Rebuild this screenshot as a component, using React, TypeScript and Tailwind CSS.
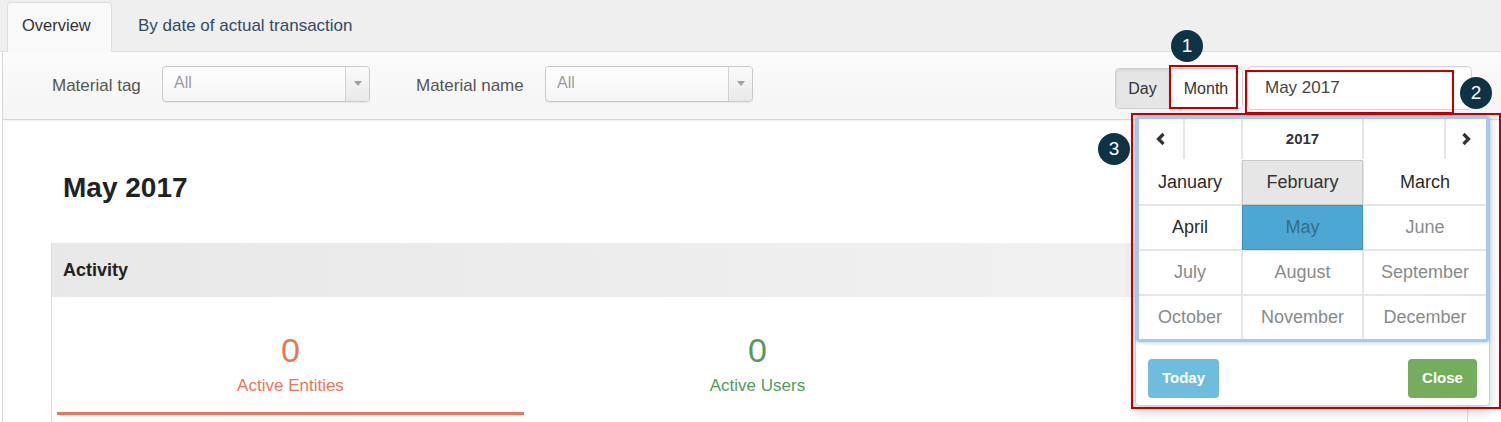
import React from 'react';

type Tone = 'dark' | 'hover' | 'active' | 'muted';

const months: { name: string; tone: Tone }[] = [
  { name: 'January', tone: 'dark' },
  { name: 'February', tone: 'hover' },
  { name: 'March', tone: 'dark' },
  { name: 'April', tone: 'dark' },
  { name: 'May', tone: 'active' },
  { name: 'June', tone: 'muted' },
  { name: 'July', tone: 'muted' },
  { name: 'August', tone: 'muted' },
  { name: 'September', tone: 'muted' },
  { name: 'October', tone: 'muted' },
  { name: 'November', tone: 'muted' },
  { name: 'December', tone: 'muted' },
];

const toneClass: Record<Tone, string> = {
  dark: 'bg-white text-[#2b2b2b]',
  hover: 'bg-[#e6e6e6] text-[#333] outline outline-1 outline-[#c9c9c9]',
  active: 'bg-[#4ca8d2] text-[#346e89] outline outline-1 outline-[#3d96bf]',
  muted: 'bg-white text-[#8a8a8a]',
};

function SelectBox() {
  return (
    <div className="mb-[4px] flex h-[36px] w-[208px] rounded-[4px] border border-[#c9c9c9] bg-linear-to-b from-white to-[#f5f5f5] shadow-[0_1px_1px_rgba(0,0,0,0.06)]">
      <div className="flex flex-1 items-center pb-[1px] pl-[11px] text-[16px] text-[#9b9b9b]">All</div>
      <div className="flex w-[24px] items-center justify-center rounded-r-[4px] border-l border-[#d2d2d2] bg-linear-to-b from-[#fafafa] to-[#e9e9e9]">
        <span className="border-x-[4px] border-t-[5px] border-x-transparent border-t-[#a0a0a0]" />
      </div>
    </div>
  );
}

function Chevron({ dir }: { dir: 'left' | 'right' }) {
  return (
    <svg width="12" height="14" viewBox="0 0 12 14" fill="none">
      <path
        d={dir === 'left' ? 'M8.5 2 L3.5 7 L8.5 12' : 'M3.5 2 L8.5 7 L3.5 12'}
        stroke="#333"
        strokeWidth="3.2"
        strokeLinejoin="miter"
      />
    </svg>
  );
}

function Marker({ n, className }: { n: number; className: string }) {
  return (
    <div
      className={`absolute flex h-[32px] w-[32px] items-center justify-center rounded-full bg-[#0d3345] text-[19px] text-white ${className}`}
    >
      {n}
    </div>
  );
}

function Stat({ value, label, color, underline }: { value: string; label: string; color: string; underline?: string }) {
  return (
    <div className="flex w-[467px] flex-col items-center pt-[34px]">
      <div className={`text-[34px] leading-[38px] ${color}`}>{value}</div>
      <div className={`mt-[7px] text-[17px] leading-[20px] ${color}`}>{label}</div>
      <div className={`mt-[16px] h-[3px] w-full ${underline ?? 'bg-transparent'}`} />
    </div>
  );
}

export default function App() {
  return (
    <div className="relative h-[422px] w-[1501px] overflow-hidden bg-white font-['Liberation_Sans',Arial,sans-serif]">
      {/* tabs */}
      <div className="flex h-[52px] items-end border-b border-[#dedede] bg-[#efefef] pl-[7px]">
        <div className="-mb-px flex h-[50px] w-[105px] items-center rounded-t-[4px] border border-b-0 border-[#dedede] bg-[#f9f9f9] pb-[4px] pl-[14px] text-[16.5px] text-[#333]">
          Overview
        </div>
        <div className="flex h-[50px] items-center pl-[26px] text-[17px] text-[#2f4a66]">By date of actual transaction</div>
      </div>

      <div className="ml-[2px] border-l border-[#dcdcdc]">
        {/* filter bar */}
        <div className="flex h-[68px] items-center border-b border-[#d6d6d6] bg-linear-to-b from-[#fbfbfb] to-[#f5f5f5] pl-[49px] pr-[29px] shadow-[0_1px_2px_rgba(0,0,0,0.06)]">
          <div className="w-[110px] text-[17px] text-[#555]">Material tag</div>
          <SelectBox />
          <div className="ml-[46px] w-[129px] text-[17px] text-[#555]">Material name</div>
          <SelectBox />
          <div className="flex-1" />
          <div className="mt-[6px] flex h-[41px] overflow-hidden rounded-[4px] border border-[#cdcdcd] text-[16px] text-[#333]">
            <div className="flex w-[53px] items-center justify-center bg-[#e6e6e6] shadow-[inset_0_2px_3px_rgba(0,0,0,0.08)]">Day</div>
            <div className="flex w-[73px] items-center justify-center border-l border-[#cdcdcd] bg-white">Month</div>
          </div>
          <div className="ml-[4px] mt-[4px] flex h-[44px] w-[225px] items-center rounded-[5px] border border-[#d4d4d4] bg-white pl-[17px] text-[17px] text-[#444] shadow-[inset_0_1px_1px_rgba(0,0,0,0.05)]">
            May 2017
          </div>
        </div>

        {/* content */}
        <div className="pl-[48px] pr-[33px]">
          <h1 className="ml-[12px] pt-[52px] text-[28px] font-bold leading-[32px] text-[#222]">May 2017</h1>
          <div className="mt-[39px] h-[200px] border-x border-[#dddddd]">
            <div className="flex h-[54px] items-center bg-linear-to-r from-[#e8e8e8] to-[#f4f4f4] pl-[11px] text-[18px] font-bold text-[#222]">
              Activity
            </div>
            <div className="flex pl-[5px]">
              <Stat value="0" label="Active Entities" color="text-[#ea7659]" underline="bg-[#ea7659]" />
              <Stat value="0" label="Active Users" color="text-[#4f9d58]" />
            </div>
          </div>
        </div>
      </div>

      {/* month picker popover */}
      <div className="absolute left-[1135px] top-[115px] w-[355px] rounded-[4px] border border-[#cfcfcf] bg-white shadow-[0_6px_12px_rgba(0,0,0,0.18)]">
        <div className="rounded-[3px] border-[3px] border-[#a4c9f2] shadow-[0_0_4px_rgba(80,150,230,0.55)]">
          <div className="grid grid-cols-[44px_56px_119px_80px_40px] gap-[2px] bg-[#e6e6e6]">
            <div className="flex h-[40px] items-center justify-center bg-white">
              <Chevron dir="left" />
            </div>
            <div className="bg-white" />
            <div className="flex items-center justify-center bg-white text-[15px] font-bold text-[#333]">2017</div>
            <div className="bg-white" />
            <div className="flex items-center justify-center bg-white">
              <Chevron dir="right" />
            </div>
          </div>
          <div className="mt-[2px] grid grid-cols-[102px_119px_122px] gap-[2px] bg-[#e6e6e6]">
            {months.map((m) => (
              <div key={m.name} className={`flex h-[43px] items-center justify-center text-[18px] ${toneClass[m.tone]}`}>
                {m.name}
              </div>
            ))}
          </div>
        </div>
        <div className="flex justify-between px-[12px] pb-[7px] pt-[17px]">
          <button className="h-[39px] w-[71px] rounded-[4px] bg-[#6fbddd] text-[15px] font-bold text-white">Today</button>
          <button className="h-[39px] w-[69px] rounded-[4px] bg-[#74ae5d] text-[15px] font-bold text-white">Close</button>
        </div>
      </div>

      {/* annotations */}
      <div className="absolute left-[1169px] top-[65px] h-[44px] w-[69px] border-2 border-[#c00000]" />
      <div className="absolute left-[1245px] top-[70px] h-[44px] w-[209px] border-2 border-[#c00000]" />
      <div className="absolute left-[1131px] top-[113px] h-[296px] w-[370px] border-2 border-[#c00000]" />
      <Marker n={1} className="left-[1171px] top-[30px]" />
      <Marker n={2} className="left-[1460px] top-[77px]" />
      <Marker n={3} className="left-[1098px] top-[133px]" />
    </div>
  );
}
